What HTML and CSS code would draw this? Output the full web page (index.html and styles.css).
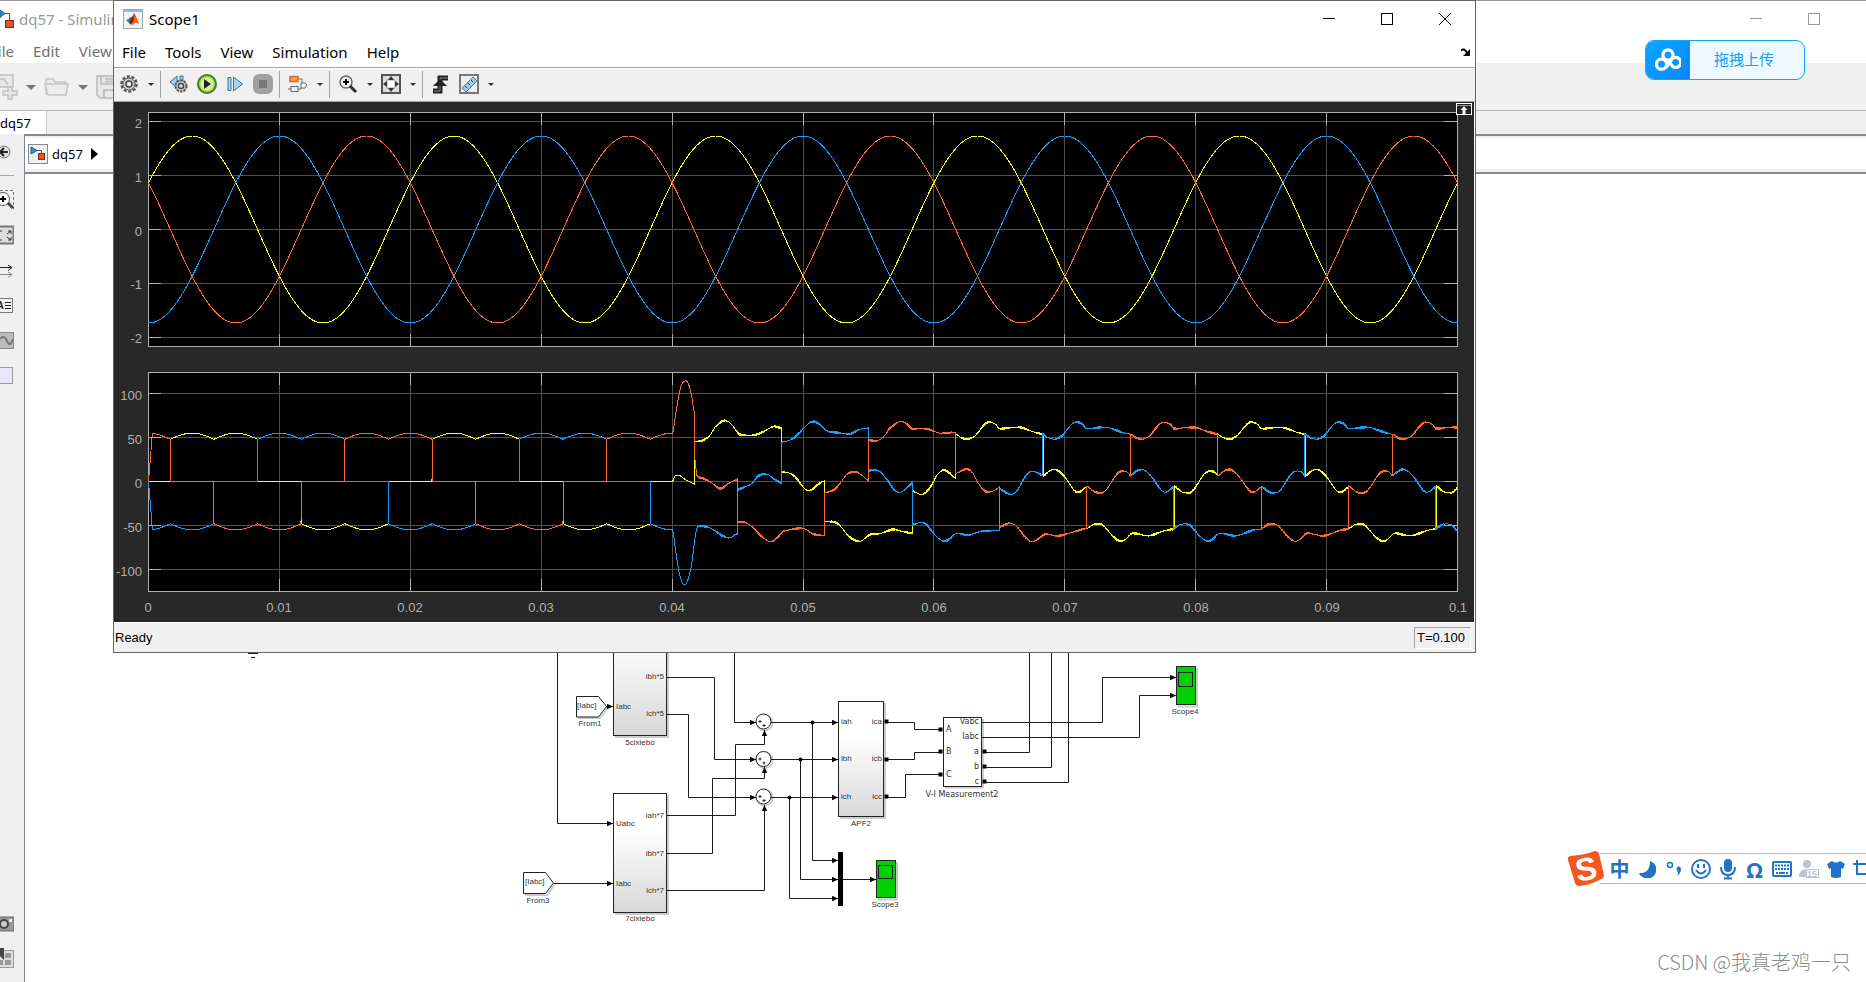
FILE: index.html
```html
<!DOCTYPE html>
<html lang="en">
<head>
  <meta charset="UTF-8">
  <meta name="viewport" content="width=device-width, initial-scale=1.0">
  <title>dq57 - Simulink</title>
  <link rel="stylesheet" href="styles.css">
</head>
<body>
  <div class="simulink">
    <header class="sim-title">
      <svg class="sim-logo" width="15" height="20" viewBox="0 0 15 20">
        <path d="M0 1l5 3.500l-5 4z" fill="#2f8fd0" stroke="#1f5f90"/>
        <path d="M4 4.500h5.500v7" fill="none" stroke="#555"/>
        <rect x="5.500" y="11.500" width="8" height="7" fill="#d9572b" stroke="#8a2a10"/>
      </svg>
      <span>dq57 - Simulink</span>
      <div class="win-buttons">
        <button aria-label="Minimize"><svg width="12" height="12" viewBox="0 0 12 12"><path d="M0 5.500h12"/></svg></button>
        <button aria-label="Maximize"><svg width="12" height="12" viewBox="0 0 12 12"><rect x=".5" y=".5" width="11" height="11"/></svg></button>
      </div>
    </header>
    <nav class="sim-menu">
      <a href="#">File</a>
      <a href="#">Edit</a>
      <a href="#">View</a>
    </nav>
    <div class="sim-toolbar">
      <button aria-label="New"><svg width="18" height="26" viewBox="0 0 18 26" fill="#e8e8e8" stroke="#c0c0c0" stroke-width="1.500"><path d="M-4 1h17v12h-17z"/><path d="M0 5h4l4 6" fill="none"/><path d="M8 13h4v4h5v4h-5v4h-4v-4h-5v-4h5z"/></svg></button>
      <button class="drop" aria-label="New options"></button>
      <button aria-label="Open"><svg width="26" height="20" viewBox="0 0 26 20" fill="#ececec" stroke="#c4c4c4" stroke-width="1.500"><path d="M2 18V2h7l2 3h11v3"/><path d="M1 7h23l-2 11H4z"/></svg></button>
      <button class="drop" aria-label="Open options"></button>
      <button aria-label="Save"><svg width="24" height="24" viewBox="0 0 24 24" fill="#e8e8e8" stroke="#b8b8b8" stroke-width="1.500"><path d="M1 1h22v22H4l-3-3z"/><path d="M5 1v8h18M8 23v-8h15M9 4h12M9 6.500h12"/></svg></button>
    </div>
    <div class="sim-tabs"><button class="tab">dq57</button></div>
    <div class="sim-main">
      <aside class="palette">
        <svg width="14" height="812" viewBox="0 0 14 812" fill="none">
          <g stroke="#777"><circle cx="4" cy="16" r="6" fill="#ddd"/><path d="M0 16h8M4 12l-4 4 4 4" stroke="#222" stroke-width="2"/></g>
          <path d="M0 39.500h14" stroke="#aaa"/>
          <g stroke="#777"><path d="M0 54.500h13.500v19" stroke-dasharray="3 2"/><circle cx="3" cy="63" r="6.500" stroke="#555" fill="#fff"/><path d="M0 63h6M3 60v6" stroke="#000" stroke-width="2"/><path d="M8 67l5 5" stroke="#444" stroke-width="3"/></g>
          <g><rect x="-6" y="90.500" width="19.500" height="17" fill="#ddd" stroke="#777" stroke-width="2"/><path d="M8 95h3v3M8 104h3v-3M2 95h-2M2 104h-2M11 95l-4 3M11 104l-4-3" stroke="#333"/></g>
          <path d="M0 131.500h12M8 129l4 2.500-4 3" stroke="#222"/><path d="M0 138.500h12M8 136l4 2.500-4 3" stroke="#888"/>
          <rect x="-6" y="162.500" width="18.500" height="14" fill="#f4f4f4" stroke="#777"/><text x="-4" y="173" font-family="Liberation Sans" font-weight="bold" font-size="11" fill="#222">A</text><path d="M5 166.500h6M5 169.500h6M5 172.500h6" stroke="#222"/>
          <rect x="-6" y="196.500" width="19.500" height="16" fill="#bbb" stroke="#888"/><path d="M0 203q4-5 7 2t6-2" stroke="#777" stroke-width="2"/>
          <rect x="-6" y="231.500" width="18.500" height="16" fill="#e8e8fa" stroke="#999"/>
          <rect x="-6" y="781" width="20" height="14" fill="#999" stroke="#666"/><circle cx="4" cy="788" r="4" fill="#ccc" stroke="#444" stroke-width="2"/><rect x="9" y="783" width="3" height="3" fill="#eee"/>
        </svg>
        <svg width="14" height="20" viewBox="0 0 14 20"><rect x="-2" y="2.500" width="15.500" height="17" fill="#ddd" stroke="#999"/><path d="M5 5h6v5H5zM5 12h6v5H5zM0 12h3v5H0z" fill="#999"/><path d="M0 0h4v12L0 8z" fill="#444"/></svg>
      </aside>
      <div class="editor">
        <div class="crumbs">
          <svg width="20" height="20" viewBox="0 0 20 20"><rect x=".5" y=".5" width="19" height="19" fill="#eef0f3" stroke="#888"/><path d="M3 3l6 3.500-6 3.500z" fill="#2f8fd0" stroke="#1f5f90"/><path d="M9 6.500h4.500v3" fill="none" stroke="#555"/><rect x="10.500" y="9.500" width="6" height="6" fill="#d9572b" stroke="#8a2a10"/></svg>
          <a href="#">dq57</a>
          <svg width="7" height="12" viewBox="0 0 7 12"><path d="M0 0l7 6-7 6z"/></svg>
        </div>
        <div class="canvas">
          <svg class="diagram" width="1300" height="760" viewBox="25 174 1300 760">
            <defs>
              <linearGradient id="block" x1="0" y1="0" x2="0" y2="1"><stop offset=".3" stop-color="#fff"/><stop offset="1" stop-color="#d8d8d8"/></linearGradient>
              <marker id="arrow" markerUnits="userSpaceOnUse" markerWidth="6" markerHeight="6" refX="6" refY="3" orient="auto"><path d="M0 .3L6 3L0 5.700z"/></marker>
            </defs>
            <g class="shadow">
              <path d="M615 737h53V640M615 914h53V795M840 818h45V703M945 787.500h38V719M578 718h22l8-11M525 895h22l8-11M878 899.500h19V862M1178 706.500h19V668"/>
              <circle cx="764.500" cy="722.500" r="8"/><circle cx="764.500" cy="760" r="8"/><circle cx="764.500" cy="797.500" r="8"/>
            </g>
            <path class="wire" d="M248 653.500h10" stroke="#777"/><path class="wire" d="M251 657.500h4"/>
            <g class="wire">
              <path d="M557.500 600V823.500H613" marker-end="url(#arrow)"/>
              <path d="M606 706.500H613" marker-end="url(#arrow)"/>
              <path d="M554 883.500H613" marker-end="url(#arrow)"/>
              <path d="M666 677.500H714.500V759.500H756" marker-end="url(#arrow)"/>
              <path d="M666 714.500H688.500V797.500H756" marker-end="url(#arrow)"/>
              <path d="M734.500 600V722.500H756" marker-end="url(#arrow)"/>
              <path d="M666 815.500H735.500V744.500H764.500V730" marker-end="url(#arrow)"/>
              <path d="M666 853.500H712.500V778.500H764.500V767" marker-end="url(#arrow)"/>
              <path d="M666 890.500H764.500V805" marker-end="url(#arrow)"/>
              <path d="M771 722.500H838" marker-end="url(#arrow)"/>
              <path d="M771 759.500H838" marker-end="url(#arrow)"/>
              <path d="M771 797.500H838" marker-end="url(#arrow)"/>
              <path d="M812.500 722V860.500H838" marker-end="url(#arrow)"/>
              <path d="M800.500 759V879.500H838" marker-end="url(#arrow)"/>
              <path d="M789.500 797V898.500H838" marker-end="url(#arrow)"/>
              <path d="M843 879.500H876" marker-end="url(#arrow)"/>
              <path d="M888 722.500H914.500V729.500H939M888 759.500H914.500V752.500H939M888 797.500H905.500V774.500H939"/>
              <path d="M981 722.500H1102.500V677.500H1176" marker-end="url(#arrow)"/>
              <path d="M981 737.500H1139.500V695.500H1176" marker-end="url(#arrow)"/>
              <path d="M985 752.500H1029.500V600M985 767.500H1051.500V600M985 782.500H1068.500V600"/>
            </g>
            <g class="node"><circle cx="812.500" cy="722.500" r="2"/><circle cx="800.500" cy="759.500" r="2"/><circle cx="789.500" cy="797.500" r="2"/></g>
            <g class="shape">
              <rect x="613.500" y="600.500" width="53" height="135" fill="url(#block)"/>
              <rect x="613.500" y="793.500" width="53" height="119" fill="url(#block)"/>
              <rect x="838.500" y="701.500" width="45" height="115" fill="url(#block)"/>
              <rect x="943.500" y="717.500" width="38" height="69"/>
              <path d="M576.500 696.500h22l8 10-8 10.500h-22zM523.500 872.500h22l8 10.500-8 10.500h-22z"/>
              <circle cx="763.500" cy="721.500" r="7.500"/><circle cx="763.500" cy="759" r="7.500"/><circle cx="763.500" cy="796.500" r="7.500"/>
              <path d="M758.500 721.500h3M760 720v3M762.500 725.500h3M764 724v3M758.500 759h3M760 757.500v3M762.500 763h3M764 761.500v3M758.500 796.500h3M760 795v3M762.500 800.500h3M764 799v3"/>
              <g class="port"><rect x="885.500" y="720.500" width="2" height="2"/><rect x="885.500" y="758.500" width="2" height="2"/><rect x="885.500" y="795.500" width="2" height="2"/><rect x="939.500" y="728.500" width="2" height="2"/><rect x="939.500" y="750.500" width="2" height="2"/><rect x="939.500" y="773.500" width="2" height="2"/><rect x="983.500" y="750.500" width="2" height="2"/><rect x="983.500" y="765.500" width="2" height="2"/><rect x="983.500" y="780.500" width="2" height="2"/></g>
              <g class="scope-block"><rect x="876.500" y="860.500" width="19" height="37"/><rect x="878.500" y="865.500" width="14" height="13"/><rect x="1176.500" y="666.500" width="19" height="38"/><rect x="1178.500" y="672.500" width="14" height="14"/></g>
            </g>
            <rect x="838" y="852" width="5" height="54"/>
            <g class="labels">
              <text x="577" y="708">[Iabc]</text><text x="525" y="884">[Iabc]</text>
              <text x="616" y="709">Iabc</text><text x="616" y="826">Uabc</text><text x="616" y="886">Iabc</text>
              <text x="841" y="724">iah</text><text x="841" y="761">ibh</text><text x="841" y="799">ich</text>
              <g text-anchor="end"><text x="664" y="679">ibh*5</text><text x="664" y="716">ich*5</text><text x="664" y="818">iah*7</text><text x="664" y="856">ibh*7</text><text x="664" y="893">ich*7</text><text x="882" y="724">ica</text><text x="882" y="761">icb</text><text x="882" y="799">icc</text></g>
            </g>
            <g class="labels wide">
              <text x="946" y="732">A</text><text x="946" y="754">B</text><text x="946" y="777">C</text>
              <g text-anchor="end"><text x="979" y="724">Vabc</text><text x="979" y="739">Iabc</text><text x="979" y="754">a</text><text x="979" y="769">b</text><text x="979" y="784">c</text></g>
              <text class="name" x="962" y="797">V-I Measurement2</text>
            </g>
            <g class="labels names">
              <text x="590" y="726">From1</text><text x="640" y="745">5cixiebo</text><text x="538" y="903">From3</text><text x="640" y="921">7cixiebo</text><text x="861" y="826">APF2</text><text x="885" y="907">Scope3</text><text x="1185" y="714">Scope4</text>
            </g>
          </svg>
        </div>
      </div>
    </div>
  </div>

  <section class="scope">
    <header class="scope-title">
      <svg width="20" height="20" viewBox="0 0 20 20"><rect x=".5" y=".5" width="19" height="19" fill="#f0f3f6" stroke="#9aa"/><rect x="1" y="1" width="18" height="2" fill="#9ab8d8"/><path d="M3 11l4-2 2 2-3 3z" fill="#3a85c0"/><path d="M7 9q3-1 4-5l1 7-4 5-2-2z" fill="#7a2a18"/><path d="M11 4q2 2 5 11-3-2-4-1t-3 3q2-6 2-13z" fill="#e8601c"/></svg>
      <h1>Scope1</h1>
      <div class="win-buttons">
        <button aria-label="Minimize"><svg width="12" height="12" viewBox="0 0 12 12"><path d="M0 5.500h12"/></svg></button>
        <button aria-label="Maximize"><svg width="12" height="12" viewBox="0 0 12 12"><rect x=".5" y=".5" width="11" height="11"/></svg></button>
        <button aria-label="Close"><svg width="12" height="12" viewBox="0 0 12 12"><path d="M0 0l12 12M12 0L0 12"/></svg></button>
      </div>
    </header>
    <nav class="scope-menu">
      <a href="#">File</a>
      <a href="#">Tools</a>
      <a href="#">View</a>
      <a href="#">Simulation</a>
      <a href="#">Help</a>
      <svg class="dock" width="9" height="8" viewBox="0 0 9 8"><path d="M0 2q4-2 6 3" fill="none" stroke="#000" stroke-width="2"/><path d="M9 1v7H2z"/></svg>
    </nav>
    <div class="scope-toolbar">
      <button aria-label="Configuration"><svg width="18" height="18" viewBox="0 0 18 18" fill="none"><circle cx="9" cy="9" r="7.500" stroke="#555" stroke-width="2.500" stroke-dasharray="3 1.700"/><circle cx="9" cy="9" r="6" fill="#ccc" stroke="#555"/><circle cx="9" cy="9" r="3" fill="#f0f0f0" stroke="#444" stroke-width="1.500"/></svg></button>
      <button class="drop" aria-label="Configuration options"></button>
      <i class="sep"></i>
      <button aria-label="Step back"><svg width="20" height="18" viewBox="0 0 20 18"><path d="M8 1v12L1 7z" fill="#a8cde8" stroke="#3a6f9a"/><path d="M11 1h3v12h-3z" fill="#a8cde8" stroke="#3a6f9a"/><circle cx="12" cy="11" r="5.500" fill="#ccc" stroke="#555" stroke-width="2" stroke-dasharray="2.500 1"/><circle cx="12" cy="11" r="2.500" fill="#eee" stroke="#444" stroke-width="1.500"/></svg></button>
      <button aria-label="Run"><svg width="20" height="20" viewBox="0 0 20 20"><circle cx="10" cy="10" r="9" fill="#a6dc52" stroke="#4b7a26" stroke-width="2"/><circle cx="10" cy="10" r="6.500" fill="#d6f2a0"/><path d="M7 5l7 5-7 5z" fill="#222"/></svg></button>
      <button aria-label="Step forward"><svg width="17" height="16" viewBox="0 0 17 16" fill="#a8d4f0" stroke="#3a6f9a"><path d="M1 1.500h3v13H1zM6.500 1l9 7-9 7z"/></svg></button>
      <button aria-label="Stop"><svg width="20" height="20" viewBox="0 0 20 20"><rect width="20" height="20" rx="6" fill="#a0a0a0"/><rect x="6" y="6" width="8" height="8" fill="#777"/></svg></button>
      <i class="sep"></i>
      <button aria-label="Highlight block"><svg width="20" height="18" viewBox="0 0 20 18" fill="none" stroke="#666"><rect x="2" y="1.500" width="8" height="5" fill="#f5a35a" stroke="#d9681c" stroke-width="1.500"/><path d="M10 4h4v5M0 14h3M10 14h3l3-4"/><path d="M13 8h4l2 2-2 3h-4z" fill="#fff"/><rect x="3" y="11.500" width="7" height="5" fill="#eee"/></svg></button>
      <button class="drop" aria-label="Highlight options"></button>
      <i class="sep"></i>
      <button aria-label="Zoom"><svg width="20" height="18" viewBox="0 0 20 18"><circle cx="8" cy="7" r="6" fill="#eef4f8" stroke="#666" stroke-width="1.500"/><path d="M5 7h6M8 4v6" stroke="#000" stroke-width="2"/><path d="M12 11l6 6" stroke="#333" stroke-width="3"/></svg></button>
      <button class="drop" aria-label="Zoom options"></button>
      <button aria-label="Scale axes"><svg width="20" height="20" viewBox="0 0 20 20"><rect x="1" y="1" width="18" height="18" fill="#ddd" stroke="#555" stroke-width="2"/><rect x="6" y="6" width="8" height="8" fill="#fff" stroke="#aaa"/><path d="M10 2l3 4H7zM10 18l3-4H7zM2 10l4-3v6zM18 10l-4-3v6z" fill="#333"/></svg></button>
      <button class="drop" aria-label="Scale options"></button>
      <i class="sep"></i>
      <button aria-label="Triggers"><svg width="18" height="20" viewBox="0 0 18 20"><path d="M1 17h7V4h8" fill="none" stroke="#222" stroke-width="5"/><path d="M2 17h6V4h8" fill="none" stroke="#888"/><path d="M1 12l7-7 7 7z" fill="#222"/></svg></button>
      <button aria-label="Measurements"><svg width="20" height="20" viewBox="0 0 20 20"><rect x="1" y="1" width="18" height="18" fill="#eee" stroke="#777" stroke-width="2"/><path d="M3 14L14 3l4 4L7 18z" fill="#9ccbe6" stroke="#4a7898"/><path d="M6 12l2 2M9 9l2 2M12 6l2 2" stroke="#246"/></svg></button>
      <button class="drop" aria-label="Measurement options"></button>
    </div>

    <div class="scope-body">
      <svg class="restore" width="16" height="12" viewBox="0 0 16 12"><rect x=".5" y=".5" width="15" height="11" fill="#222" stroke="#fff"/><path d="M1 2.500h14" stroke="#999"/><path d="M8 3l3.500 4H9.500v4h-3V7h-2z" fill="#fff"/></svg>
      <div class="plot">
        <ul class="y-axis y-voltage"><li>2</li><li>1</li><li>0</li><li>-1</li><li>-2</li></ul>
        <svg id="voltage" class="voltage" viewBox="0 0 1310 235" preserveAspectRatio="none"></svg>
      </div>
      <div class="plot">
        <ul class="y-axis y-current"><li>100</li><li>50</li><li>0</li><li>-50</li><li>-100</li></ul>
        <svg id="current" class="current" viewBox="0 0 1310 220" preserveAspectRatio="none"></svg>
      </div>
      <ul class="x-axis"><li>0</li><li>0.01</li><li>0.02</li><li>0.03</li><li>0.04</li><li>0.05</li><li>0.06</li><li>0.07</li><li>0.08</li><li>0.09</li><li>0.1</li></ul>
    </div>
    <footer class="scope-status"><span>Ready</span><output>T=0.100</output></footer>
  </section>

  <button class="upload">
    <span class="upload-icon"><svg width="26" height="24" viewBox="0 0 28 26" fill="none" stroke="#fff" stroke-width="3.500"><circle cx="14" cy="7.500" r="5.500"/><circle cx="7" cy="17.500" r="5.500"/><path d="M14 13l5 7a5.500 5.500 0 1 0-2-6l-5 7"/></svg></span>
    <span class="upload-text">拖拽上传</span>
  </button>

  <div class="ime">
    <svg class="ime-logo" width="38" height="36" viewBox="0 0 38 36"><path d="M3 5Q18 4 28 0q3 0 4 3l5 21q0 3-3 4-10 6-22 7-3 0-4-3L1 9q-1-3 2-4z" fill="#f4581c"/><text x="19" y="29" transform="rotate(-10 19 18)" text-anchor="middle">S</text></svg>
    <button>中</button>
    <button aria-label="Moon"><svg width="18" height="18" viewBox="0 0 18 18"><path d="M12 1a9 9 0 1 1-11 12q11 1 11-12z"/></svg></button>
    <button aria-label="Punctuation"><svg width="18" height="18" viewBox="0 0 18 18"><circle cx="5" cy="5" r="2.500" fill="none" stroke="#1f73c8" stroke-width="1.500"/><path d="M12 7a2.500 2.500 0 0 1 4 2q0 4-4 7 1.500-3 1-4-2-1-1-5z"/></svg></button>
    <button aria-label="Emoji"><svg width="22" height="22" viewBox="0 0 22 22"><g fill="none" stroke="#1f73c8" stroke-width="2"><circle cx="11" cy="11" r="9"/><path d="M6 12q5 7 10 0"/></g><path d="M7 6h2v4H7zM13 6h2v4h-2z"/></svg></button>
    <button aria-label="Voice"><svg width="18" height="22" viewBox="0 0 18 22"><rect x="5" y="1" width="8" height="13" rx="4"/><path d="M2 9q0 8 7 8t7-8M9 17v4M5 20.500h8" fill="none" stroke="#1f73c8" stroke-width="2"/></svg></button>
    <button class="omega">Ω</button>
    <button aria-label="Keyboard"><svg width="20" height="16" viewBox="0 0 20 16"><rect x="1" y="1" width="18" height="14" rx="1" fill="none" stroke="#1f73c8" stroke-width="2"/><path d="M3 4.500h14M3 8h14" stroke="#1f73c8" stroke-width="2" stroke-dasharray="2 1"/><path d="M4 12h12" stroke="#1f73c8" stroke-width="2" stroke-dasharray="2 1 6 1"/></svg></button>
    <button aria-label="Account"><svg width="20" height="20" viewBox="0 0 20 20" fill="#b8c4d8"><circle cx="8" cy="5" r="4"/><path d="M0 18q0-8 8-8v8z"/><rect x="7.500" y="10.500" width="12" height="8" fill="#fff" stroke="#b8c4d8"/><text x="8" y="18" font-size="9" font-family="Liberation Sans" font-weight="bold">15</text></svg></button>
    <button aria-label="Skin"><svg width="18" height="18" viewBox="0 0 18 18"><path d="M5 1q4 3 8 0l5 3-2 5-2-1v9q-5 2-10 0V8L2 9 0 4z"/></svg></button>
    <button aria-label="Crop"><svg width="20" height="18" viewBox="0 0 20 18"><path d="M0 4h16v14M4 0v14h16" fill="none" stroke="#1f73c8" stroke-width="2"/></svg></button>
  </div>

  <p class="watermark">CSDN @我真老鸡一只</p>

  <script src="script.js"></script>
</body>
</html>
```

FILE: styles.css
```css
* {
  box-sizing: border-box;
}

body {
  margin: 0;
  height: 100vh;
  overflow: hidden;
  position: relative;
  background-color: #ffffff;
  font-family: "Noto Sans", "Noto Sans CJK SC", sans-serif;
  font-size: 15px;
}

a {
  color: inherit;
  text-decoration: none;
}

button {
  padding: 0;
  border: none;
  background: none;
  font: inherit;
  color: inherit;
  display: flex;
  align-items: center;
  justify-content: center;
}

ul {
  list-style: none;
  margin: 0;
  padding: 0;
}

svg {
  display: block;
  flex: none;
}

/* model editor window */
.simulink {
  height: 100%;
  display: flex;
  flex-direction: column;
  border-top: 1px solid #999999;
}

.sim-title {
  height: 36px;
  display: flex;
  align-items: center;
  color: #999999;
}

.sim-logo {
  margin-right: 4px;
}

.win-buttons {
  margin-left: auto;
  display: flex;
}

.win-buttons button {
  width: 58px;
  height: 34px;
}

.win-buttons svg {
  fill: none;
  stroke: #000000;
}

.sim-title .win-buttons {
  margin-right: 23px;
}

.sim-title .win-buttons svg {
  stroke: #999999;
}

.scope-title .win-buttons {
  margin-right: 1px;
}

.sim-menu {
  height: 27px;
  display: flex;
  gap: 19px;
  margin-left: -10px;
  line-height: 28px;
  color: #707070;
  border-bottom: 1px solid #f0f0f0;
}

.sim-toolbar {
  height: 47px;
  display: flex;
  align-items: center;
  gap: 7px;
  background-color: #f0f0f0;
  border-bottom: 1px solid #b8b8b8;
}

.drop::before {
  content: "";
  border: 3px solid transparent;
  border-top-color: #333333;
  border-bottom: none;
}

.sim-toolbar .drop {
  width: 12px;
}

.sim-toolbar .drop::before {
  border-width: 5px;
  border-bottom: none;
  border-top-color: #777777;
}

.sim-tabs {
  height: 23px;
  background-color: #f0f0f0;
}

.tab {
  width: 47px;
  height: 23px;
  justify-content: flex-start;
  background-color: #ffffff;
  border-right: 1px solid #cccccc;
  font-size: 13px;
}

.sim-main {
  flex: 1;
  display: flex;
  min-height: 0;
}

.palette {
  width: 25px;
  padding-top: 2px;
  background-color: #f0f0f0;
  border-right: 1px solid #7f868e;
  overflow: hidden;
}

.editor {
  flex: 1;
  min-width: 0;
  display: flex;
  flex-direction: column;
  border-top: 2px solid #858990;
}

.crumbs {
  height: 36px;
  display: flex;
  align-items: center;
  gap: 4px;
  padding-left: 3px;
  font-size: 13px;
  border: solid #f0f0f0;
  border-width: 2px 0 3px;
}

.crumbs a {
  margin-right: 4px;
}

.canvas {
  flex: 1;
  min-height: 0;
  overflow: hidden;
  border-top: 2px solid #858990;
}

.wire {
  fill: none;
  stroke: #1a1a1a;
}

.shadow {
  fill: none;
  stroke: #cccccc;
  stroke-width: 2;
}

.shape {
  fill: #ffffff;
  stroke: #222222;
}

.port {
  stroke: #000000;
  stroke-width: 2;
}

.scope-block {
  fill: #00d000;
}

.labels {
  font-family: "Liberation Sans", Arial, sans-serif;
  font-size: 8px;
  fill: #333333;
}

.names,
.name {
  text-anchor: middle;
}

.wide {
  font-family: "DejaVu Sans", sans-serif;
}

/* scope window */
.scope {
  position: absolute;
  top: 0;
  left: 113px;
  right: 390px;
  background-color: #f0f0f0;
  border: 1px solid #666666;
}

.scope-title {
  height: 36px;
  display: flex;
  align-items: center;
  gap: 6px;
  padding-left: 9px;
  background-color: #ffffff;
}

.scope-title h1 {
  margin: 0;
  font-size: 15px;
  font-weight: normal;
}

.scope-menu {
  height: 31px;
  display: flex;
  gap: 19px;
  padding: 0 5px 0 8px;
  line-height: 31px;
  background-color: #ffffff;
  border-bottom: 1px solid #a0a0a0;
}

.dock {
  align-self: center;
  margin-left: auto;
}

.scope-toolbar {
  height: 34px;
  display: flex;
  align-items: center;
  padding-left: 1px;
  padding-bottom: 2px;
  border-top: 1px solid #ffffff;
  border-bottom: 1px solid #a0a0a0;
}

.scope-toolbar button {
  width: 28px;
  height: 28px;
}

.scope-toolbar .drop {
  width: 15px;
}

.sep {
  width: 1px;
  height: 27px;
  margin: 0 4px 0 2px;
  background-color: #a0a0a0;
}

.scope-body {
  position: relative;
  padding: 10px 16px 6px 0;
  background-color: #282828;
  border-right: 1px solid #ffffff;
  font-family: "Liberation Sans", Arial, sans-serif;
  font-size: 13px;
  line-height: 16px;
  color: #afafaf;
}

.restore {
  position: absolute;
  top: 1px;
  right: 2px;
}

.plot {
  display: flex;
  margin-bottom: 25px;
}

.plot + .plot {
  margin-bottom: 8px;
}

.plot svg {
  flex: 1;
  min-width: 0;
  background-color: #000000;
}

.voltage {
  height: 235px;
}

.current {
  height: 220px;
}

.y-axis {
  width: 34px;
  padding-right: 6px;
  display: flex;
  flex-direction: column;
  justify-content: space-between;
  text-align: right;
}

.y-voltage {
  padding-top: 4px;
}

.y-current {
  padding-top: 16px;
  padding-bottom: 12px;
}

.x-axis {
  display: flex;
  justify-content: space-between;
  margin: 0 -15px 0 19px;
}

.x-axis li {
  width: 30px;
  text-align: center;
}

.grid,
.ticks {
  fill: none;
  stroke: #505050;
  shape-rendering: crispEdges;
}

.ticks {
  stroke: #b0b0b0;
}

.trace {
  fill: none;
  stroke-width: 1px;
  stroke-linejoin: round;
  shape-rendering: crispEdges;
}

.yellow {
  stroke: #ffff11;
}

.blue {
  stroke: #139fff;
}

.orange {
  stroke: #ff6929;
}

.scope-status {
  height: 30px;
  display: flex;
  align-items: center;
  justify-content: space-between;
  padding: 0 4px 0 1px;
  border-top: 1px solid #ffffff;
  font-family: "Liberation Sans", Arial, sans-serif;
  font-size: 13px;
}

.scope-status output {
  width: 57px;
  height: 22px;
  padding-left: 2px;
  line-height: 20px;
  border: 1px solid #ffffff;
  border-top-color: #a0a0a0;
  border-left-color: #a0a0a0;
}

/* floating upload button */
.upload {
  position: absolute;
  top: 40px;
  right: 61px;
  width: 160px;
  height: 40px;
  align-items: stretch;
  border: 1px solid #12a5ff;
  border-radius: 9px;
  overflow: hidden;
  background-color: #edf8ff;
  color: #12a0ff;
}

.upload-icon {
  width: 44px;
  display: flex;
  align-items: center;
  justify-content: center;
  background: linear-gradient(135deg, #0aa8ff, #0a86ff);
}

.upload-text {
  flex: 1;
  line-height: 36px;
  padding-right: 6px;
}

/* input method bar */
.ime {
  position: absolute;
  left: calc(100% - 266px);
  right: 0;
  bottom: 98px;
  height: 31px;
  display: flex;
  align-items: center;
  background-color: #ffffff;
  border: solid #b8b8b8;
  border-width: 1px 0;
  color: #1f73c8;
  fill: #1f73c8;
}

.ime-logo {
  margin: 0 -3px 0 -33px;
}

.ime-logo + button {
  margin-left: 4px;
}

.ime-logo text {
  font-family: "Liberation Sans", Arial, sans-serif;
  font-weight: bold;
  font-size: 32px;
  fill: #ffffff;
}

.ime button {
  flex: none;
  width: 27px;
  font-size: 20px;
  font-weight: bold;
}

.ime .omega {
  font-size: 22px;
}

.watermark {
  position: absolute;
  right: 15px;
  bottom: 6px;
  margin: 0;
  font-family: "Noto Sans CJK SC", sans-serif;
  font-weight: 300;
  font-size: 20px;
  line-height: 28px;
  color: #8c8c8c;
}
```

FILE: script.js
```js
const NS = 'http://www.w3.org/2000/svg';
const WIDTH = 1309; // 0 .. 0.1 s

function addPath(svg, d, className) {
  const path = document.createElementNS(NS, 'path');
  path.setAttribute('d', d);
  path.setAttribute('class', className);
  path.setAttribute('vector-effect', 'non-scaling-stroke');
  svg.appendChild(path);
}

function drawAxes(svg, height, rows) {
  let grid = '';
  let ticks = `M.5 .5H${WIDTH + 0.5}V${height - 0.5}H.5Z`;
  for (let i = 1; i < 10; i++) {
    const x = Math.round(i * WIDTH / 10) + 0.5;
    grid += `M${x} 0V${height}`;
    ticks += `M${x} 0v13M${x} ${height}v-13`;
  }
  rows.forEach(y => {
    grid += `M0 ${y}H${WIDTH}`;
    ticks += `M0 ${y}h13M${WIDTH} ${y}h-13`;
  });
  addPath(svg, grid, 'grid');
  addPath(svg, ticks, 'ticks');
}

function toPath(points) {
  return 'M' + points.map(p => p[0].toFixed(2) + ' ' + p[1].toFixed(2)).join('L');
}

// three phase voltage
const voltage = document.getElementById('voltage');
drawAxes(voltage, 235, [9.5, 63.5, 117.5, 171.5, 225.5]);
[['yellow', 30], ['blue', -90], ['orange', 150]].forEach(([name, phase]) => {
  const points = [];
  for (let x = 0; x <= WIDTH; x++) {
    const angle = x / WIDTH * 10 * Math.PI + phase * Math.PI / 180;
    points.push([x + 0.5, 117.5 - 93.5 * Math.sin(angle)]);
  }
  addPath(voltage, toPath(points), 'trace ' + name);
});

// rectifier current before compensation, time in ms
function loadCurrent(ms, shift) {
  const t = (((ms - shift) % 20) + 20) % 20;
  const hump = 48 + 7 * Math.abs(Math.sin(Math.PI * (t - 5 / 3) / (10 / 3)));
  let value = 0;
  if (t >= 5 / 3 && t < 25 / 3) value = hump;
  if (t >= 35 / 3 && t < 55 / 3) value = -hump;
  return value * Math.min(1, ms / 0.3);
}

// steady pieces of one period after the filter is switched on
const rise = [[0,378],[20,393],[35,398],[52,395],[70,372],[90,342],[105,333],[120,335],[131,347]];
const high = [[0,222],[15,232],[35,237],[50,232],[62,222],[80,200],[95,187],[107,187],[120,193],[130,205],[160,203],[195,202],[220,210],[240,217],[262,222]];
const fall = [[0,347],[20,332],[35,328],[45,332],[60,345],[75,365],[95,392],[110,395],[131,380]];
const low = [[0,505],[20,493],[45,493],[60,508],[80,530],[100,543],[115,538],[135,520],[160,523],[185,527],[210,520],[235,511],[262,507]];

// transient pieces
const start = {
  yellow: [
    [[37,364],[45,346],[60,347],[75,358],[90,366],[103,372]],
    [[103,245],[120,243],[135,237],[150,225],[165,200],[190,182],[205,185],[220,200],[235,220],[250,225],[290,223],[315,212],[340,199],[365,204]],
    [[365,335],[385,338],[405,350],[425,375],[440,390],[455,388],[475,372],[494,362]],
    [[494,485],[520,485],[540,497],[565,528],[595,543],[610,538],[630,523],[660,520],[700,508],[730,515],[757,519]],
    [[757,393],[780,402],[795,398],[815,375],[830,345],[850,330],[870,340],[887,355]]
  ],
  blue: [
    [[37,510],[50,595],[60,650],[72,674],[82,662],[95,610],[105,530],[112,500],[140,500],[165,512],[190,528],[210,533],[232,520]],
    [[232,388],[260,378],[275,370],[295,347],[320,342],[340,355],[365,369]],
    [[365,245],[385,241],[405,230],[430,205],[455,185],[475,190],[500,212],[530,217],[570,221],[600,207],[626,204]],
    [[626,331],[650,330],[665,340],[685,365],[705,392],[725,394],[757,369]],
    [[757,493],[785,487],[800,495],[825,525],[850,543],[870,535],[887,520],[925,525],[960,514],[1019,511]],
    [[1019,387],[1050,402],[1070,392],[1095,350],[1115,333],[1148,345]]
  ],
  orange: [
    [[37,220],[50,140],[62,80],[75,62],[85,72],[95,110],[103,160]],
    [[103,290],[110,345],[130,355],[150,365],[180,385],[205,370],[232,358]],
    [[232,485],[255,487],[280,503],[300,525],[330,545],[350,533],[370,513],[430,505],[460,522],[494,526]],
    [[494,397],[520,390],[535,375],[560,343],[583,335],[600,342],[626,362]],
    [[626,240],[650,242],[670,230],[690,203],[722,184],[740,192],[757,206],[800,206],[840,219],[887,216]],
    [[887,340],[917,327],[935,335],[955,370],[975,393],[1000,392],[1019,380]],
    [[1019,500],[1050,489],[1070,500],[1095,530],[1115,545],[1135,535],[1155,522],[1195,527],[1260,510],[1280,505]]
  ]
};
const steady = {
  yellow: [887, [high, fall, low, rise]],
  blue: [1148, [high, fall, low, rise]],
  orange: [1280, [rise, high, fall, low]]
};

// Catmull-Rom through the samples, with a little switching ripple
function smooth(samples, points) {
  for (let i = 0; i < samples.length - 1; i++) {
    const p1 = samples[i];
    const p2 = samples[i + 1];
    const p0 = samples[i - 1] || p1;
    const p3 = samples[i + 2] || p2;
    const steps = p2[0] - p1[0];
    for (let s = 0; s <= steps; s++) {
      const t = s / steps;
      const x = p1[0] + (p2[0] - p1[0]) * t;
      const y = 0.5 * (2 * p1[1] + (p2[1] - p0[1]) * t
        + (2 * p0[1] - 5 * p1[1] + 4 * p2[1] - p3[1]) * t * t
        + (3 * p1[1] - p0[1] - 3 * p2[1] + p3[1]) * t * t * t);
      const size = 1.2 + 1.2 * Math.sin(x / 9);
      const ripple = x > 105 ? (x % 2 ? size : -size) : 0;
      points.push([524.5 + (x - 37) / 3, 109.5 + (y + ripple - 364) / 3]);
    }
  }
}

const current = document.getElementById('current');
drawAxes(current, 220, [21.5, 65.5, 109.5, 153.5, 197.5]);
[['yellow', 0], ['blue', 20 / 3], ['orange', 40 / 3]].forEach(([name, shift]) => {
  const points = [];
  for (let x = 0; x < 524; x += 0.25) {
    points.push([x + 0.5, 109.5 - 0.88 * loadCurrent(x / WIDTH * 100, shift)]);
  }
  start[name].forEach(piece => smooth(piece, points));
  let [x, pieces] = steady[name];
  for (let i = 0; x < 2442; i++) {
    const piece = pieces[i % 4];
    smooth(piece.map(p => [p[0] + x, p[1]]), points);
    x += piece[piece.length - 1][0];
  }
  addPath(current, toPath(points.filter(p => p[0] <= WIDTH)), 'trace ' + name);
});
```
